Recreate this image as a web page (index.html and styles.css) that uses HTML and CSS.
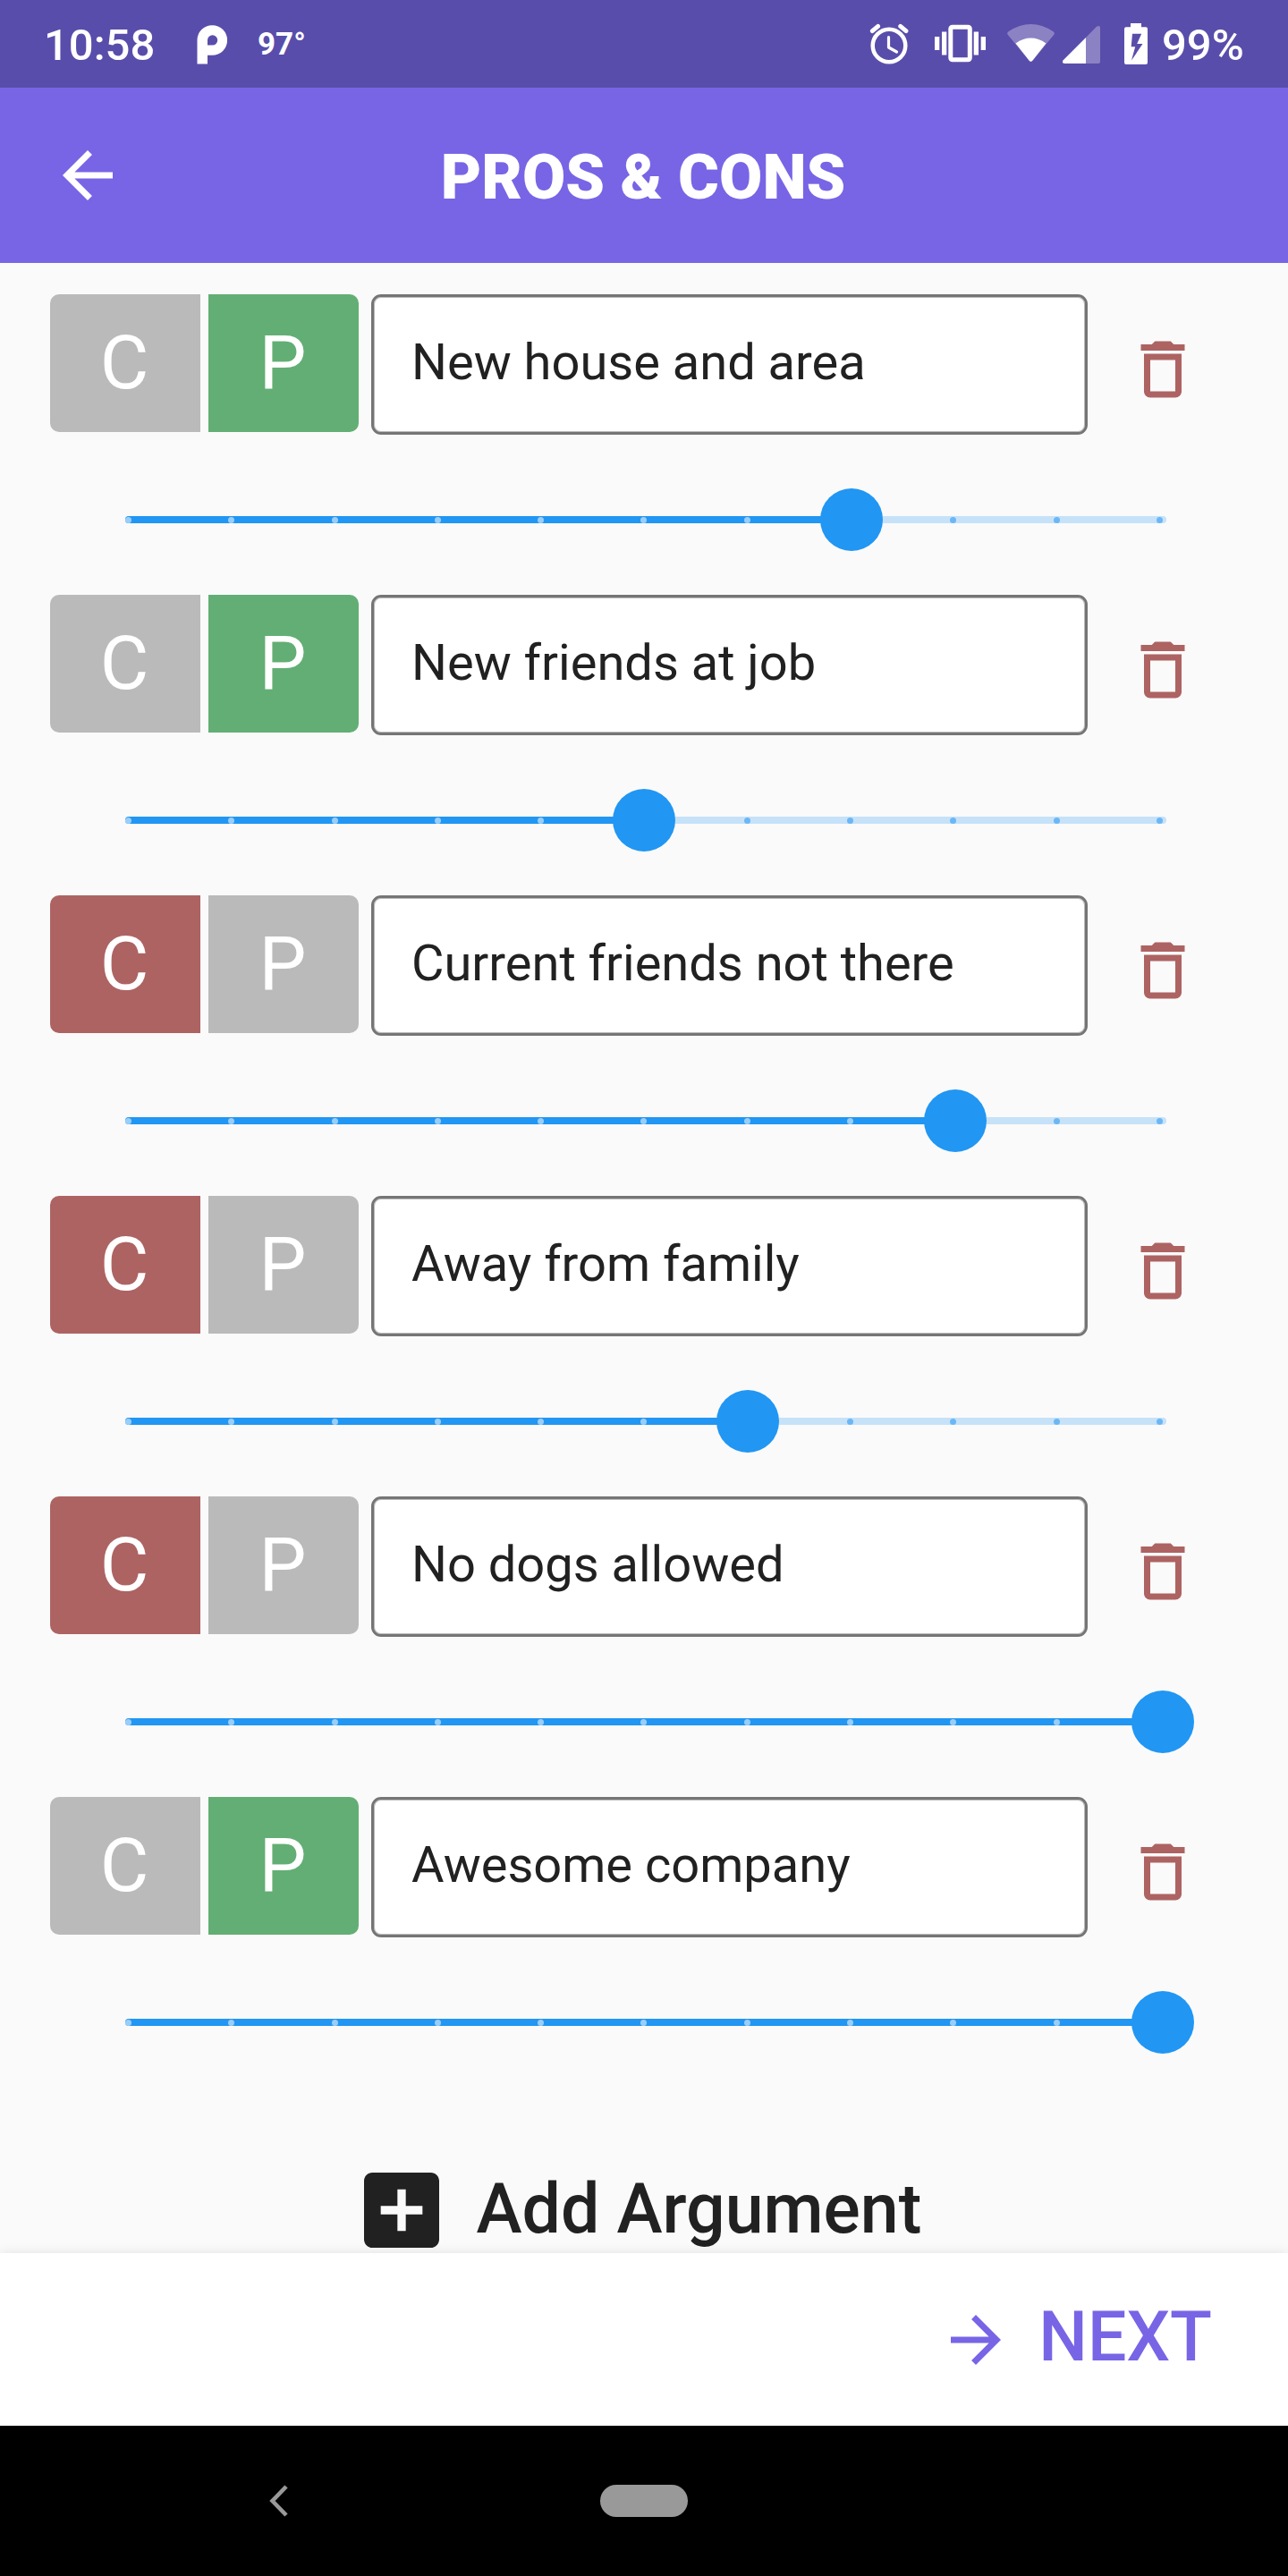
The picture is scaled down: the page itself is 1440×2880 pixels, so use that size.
FILE: index.html
```html
<!DOCTYPE html>
<html lang="en">
<head>
<meta charset="utf-8">
<title>Pros &amp; Cons</title>
<link rel="stylesheet" href="styles.css">
</head>
<body>
<svg class="sprite" aria-hidden="true">
  <symbol id="trash" viewBox="0 0 24 24"><path d="M6 19c0 1.1.9 2 2 2h8c1.1 0 2-.9 2-2V7H6v12zM8 9h8v10H8V9zm7.5-5l-1-1h-5l-1 1H5v2h14V4h-3.5z"/></symbol>
</svg>
<div class="screen">
  <header class="status">
    <span class="clock">10:58</span>
    <svg class="parking" viewBox="220 28 34 44"><path fill-rule="evenodd" d="M220.5 71.500V45a16.800 16.800 0 1 1 16.800 16.800H232v9.700zM232 50.500h5.500a5.600 5.600 0 1 0-5.500-5.500z"/></svg>
    <span class="temp">97°</span>
    <span class="spacer"></span>
    <svg class="alarm" viewBox="972 26 44 46"><g fill="none" stroke="#fff"><circle cx="994" cy="51" r="18.300" stroke-width="4.500"/><path stroke-width="3.200" stroke-linecap="round" stroke-linejoin="round" d="M993.500 41.500V53l9 5"/><path stroke-width="4.800" stroke-linecap="round" d="M975.300 34.700l6.300-5.300M1013 34.700l-6.300-5.300"/></g></svg>
    <svg class="vibrate" viewBox="1044 27 58 43"><rect x="1062.800" y="30.300" width="21.500" height="36.400" rx="2" fill="none" stroke="#fff" stroke-width="5"/><path d="M1045 41h5.300v15H1045zM1053 35.500h5.300v26H1053zM1088.700 35.500h5.300v26h-5.300zM1096.700 41h5.300v15h-5.300z"/></svg>
    <svg class="wifi" viewBox="1126 26 54 44"><path opacity=".3" d="M1126.500 38.500Q1125.500 36.500 1127.500 35.200Q1152.500 18.800 1177.500 35.200Q1179.500 36.500 1178.500 38.500L1154.500 67.800Q1152.500 70 1150.500 67.800z"/><path d="M1135.500 48.500Q1152.500 36.700 1169.500 48.500L1154.500 67.500Q1152.500 70 1150.500 67.500z"/></svg>
    <svg class="signal" viewBox="1188 28 42 43"><path opacity=".3" d="M1214 42l12-12.200q3.800-2.200 4 1.200v38q0 2-2 2h-14z"/><path d="M1214 42v29h-24q-3-.5-1.500-3.500z"/></svg>
    <svg class="battery" viewBox="1257 26 26 46"><path fill-rule="evenodd" d="M1264 26h12v4.300h5q2 0 2 2V70q0 2-2 2h-22q-2 0-2-2V32.300q0-2 2-2h5zM1266 37.700l-1.300 14.500h4.500L1265 67.500l12.500-18.500h-6.300l5-11.300z"/></svg>
    <span class="percent">99%</span>
  </header>

  <div class="appbar">
    <svg class="icon" viewBox="0 0 24 24"><path d="M20 11H7.830l5.590-5.590L12 4l-8 8 8 8 1.410-1.410L7.830 13H20v-2z"/></svg>
    <h1>PROS &amp; CONS</h1>
  </div>

  <main>
    <section class="argument">
      <div class="entry"><div class="toggle"><span>C</span><span class="pro">P</span></div><div class="field">New house and area</div><svg class="icon trash"><use href="#trash"/></svg></div>
      <div class="slider"><div class="track"><div class="fill" style="width:812px"></div><div class="ticks"><i></i><i></i><i></i><i></i><i></i><i></i><i></i><i></i><i class="off"></i><i class="off"></i><i class="off"></i></div><b style="left:812px"></b></div></div>
    </section>
    <section class="argument">
      <div class="entry"><div class="toggle"><span>C</span><span class="pro">P</span></div><div class="field">New friends at job</div><svg class="icon trash"><use href="#trash"/></svg></div>
      <div class="slider"><div class="track"><div class="fill" style="width:580px"></div><div class="ticks"><i></i><i></i><i></i><i></i><i></i><i></i><i class="off"></i><i class="off"></i><i class="off"></i><i class="off"></i><i class="off"></i></div><b style="left:580px"></b></div></div>
    </section>
    <section class="argument">
      <div class="entry"><div class="toggle"><span class="con">C</span><span>P</span></div><div class="field">Current friends not there</div><svg class="icon trash"><use href="#trash"/></svg></div>
      <div class="slider"><div class="track"><div class="fill" style="width:928px"></div><div class="ticks"><i></i><i></i><i></i><i></i><i></i><i></i><i></i><i></i><i></i><i class="off"></i><i class="off"></i></div><b style="left:928px"></b></div></div>
    </section>
    <section class="argument">
      <div class="entry"><div class="toggle"><span class="con">C</span><span>P</span></div><div class="field">Away from family</div><svg class="icon trash"><use href="#trash"/></svg></div>
      <div class="slider"><div class="track"><div class="fill" style="width:696px"></div><div class="ticks"><i></i><i></i><i></i><i></i><i></i><i></i><i></i><i class="off"></i><i class="off"></i><i class="off"></i><i class="off"></i></div><b style="left:696px"></b></div></div>
    </section>
    <section class="argument">
      <div class="entry"><div class="toggle"><span class="con">C</span><span>P</span></div><div class="field">No dogs allowed</div><svg class="icon trash"><use href="#trash"/></svg></div>
      <div class="slider"><div class="track"><div class="fill" style="width:1160px"></div><div class="ticks"><i></i><i></i><i></i><i></i><i></i><i></i><i></i><i></i><i></i><i></i><i></i></div><b style="left:1160px"></b></div></div>
    </section>
    <section class="argument">
      <div class="entry"><div class="toggle"><span>C</span><span class="pro">P</span></div><div class="field">Awesome company</div><svg class="icon trash"><use href="#trash"/></svg></div>
      <div class="slider"><div class="track"><div class="fill" style="width:1160px"></div><div class="ticks"><i></i><i></i><i></i><i></i><i></i><i></i><i></i><i></i><i></i><i></i><i></i></div><b style="left:1160px"></b></div></div>
    </section>
    <div class="add">
      <svg viewBox="0 0 24 24"><path d="M19 3H5c-1.110 0-2 .9-2 2v14c0 1.100.89 2 2 2h14c1.100 0 2-.9 2-2V5c0-1.100-.9-2-2-2zm-2 10h-4v4h-2v-4H7v-2h4V7h2v4h4v2z"/></svg>
      <span>Add Argument</span>
    </div>
  </main>

  <footer class="bottom">
    <svg class="icon" viewBox="0 0 24 24"><path d="M12 4l-1.410 1.410L16.170 11H4v2h12.170l-5.580 5.590L12 20l8-8z"/></svg>
    <span>NEXT</span>
  </footer>

  <nav class="sysnav">
    <svg class="chevron" viewBox="0 0 22 36"><path d="M19 2L3.500 18 19 34" fill="none" stroke="#999" stroke-width="4.600"/></svg>
    <span class="pill"></span>
  </nav>
</div>
</body>
</html>
```
FILE: styles.css
```css
* { box-sizing: border-box; }
body { margin: 0; font-family: Roboto, "Liberation Sans", sans-serif; color: #212121; }
svg { display: block; flex: none; fill: currentColor; }
.sprite { display: none; }
.icon { width: 84px; height: 84px; }

.screen { width: 1440px; height: 2880px; display: flex; flex-direction: column; overflow: hidden; background: #fafafa; }

.status { height: 98px; flex: none; display: flex; align-items: flex-start; padding: 0 50px 0 49px; background: #594dab; color: #fff; font-weight: 500; white-space: nowrap; }
.clock, .percent { font-size: 49px; line-height: 58px; margin-top: 22px; }
.clock { width: 171px; }
.parking { width: 34px; height: 44px; margin-top: 28px; }
.temp { margin: 29px 0 0 34px; font-size: 35px; line-height: 41px; font-weight: 700; }
.spacer { flex: 1; }
.alarm { width: 44px; height: 46px; margin-top: 26px; }
.vibrate { width: 58px; height: 43px; margin: 27px 0 0 28px; }
.wifi { width: 54px; height: 44px; margin: 26px 0 0 24px; }
.signal { width: 42px; height: 43px; margin: 28px 0 0 8px; }
.battery { width: 26px; height: 46px; margin: 26px 0 0 27px; }
.percent { width: 91px; margin-left: 16px; }

.appbar { height: 196px; flex: none; display: grid; grid-template-columns: 84px 1fr 84px; align-items: center; padding: 0 56px; background: #7765e6; color: #fff; }
.appbar h1 { margin: 4px 2px 0 0; font-size: 70px; line-height: 82px; font-weight: 900; text-align: center; }

main { flex: 1; min-height: 0; padding-top: 35px; }
.argument { height: 336px; }
.entry { display: flex; height: 158px; padding-left: 56px; }
.toggle { display: flex; gap: 8.500px; width: 345px; height: 154px; margin-right: 14px; font-size: 84px; line-height: 154px; text-align: center; color: #fff; }
.toggle span { flex: 1; padding-right: 2px; background: #bababa; }
.toggle span:first-child { border-radius: 10px 0 0 10px; }
.toggle span:last-child { border-radius: 0 10px 10px 0; }
.toggle .pro { background: #63ae74; }
.toggle .con { background: #ad6362; }
.field { width: 801px; height: 157px; border: 3px solid #757575; border-radius: 11px; background: #fff; box-shadow: inset 0 0 0 1px #bababa; padding: 0 42px; font-size: 56px; line-height: 147px; white-space: nowrap; }
.trash { margin: 41.500px 0 0 42px; color: #ad6362; }

.slider { height: 178px; padding: 90px 0 0 140px; }
.track { position: relative; width: 1163.500px; height: 8px; border-radius: 4px; background: #c6e2f9; }
.fill { height: 8px; border-radius: 4px 0 0 4px; background: #2196f3; }
.ticks { position: absolute; top: 0.500px; left: 0; width: 1160px; display: flex; justify-content: space-between; }
.ticks i { width: 7px; height: 7px; border-radius: 50%; background: #99cef9; }
.ticks .off { background: #6bb7f6; }
.track b { position: absolute; top: -31px; width: 70px; height: 70px; margin-left: -35px; border-radius: 50%; background: #2196f3; }

.add { display: flex; align-items: center; gap: 28px; margin-top: 70px; height: 112px; padding-left: 392.500px; font-size: 77px; font-weight: 500; line-height: 92px; white-space: nowrap; }
.add svg { width: 112px; height: 112px; }
.add span { margin-top: -3px; }

.bottom { position: relative; height: 193px; flex: none; display: flex; align-items: center; justify-content: flex-end; gap: 28px; padding-right: 85px; background: #fff; box-shadow: 0 0 12px rgba(0, 0, 0, .1); color: #7765e6; font-size: 77px; line-height: 92px; font-weight: 500; }
.bottom span { margin-top: -5px; }

.sysnav { height: 168px; flex: none; display: flex; align-items: center; padding-left: 301px; background: #000; position: relative; }
.chevron { width: 22px; height: 36px; }
.pill { width: 98px; height: 36px; margin-left: 348px; border-radius: 18px; background: #999; }
```
